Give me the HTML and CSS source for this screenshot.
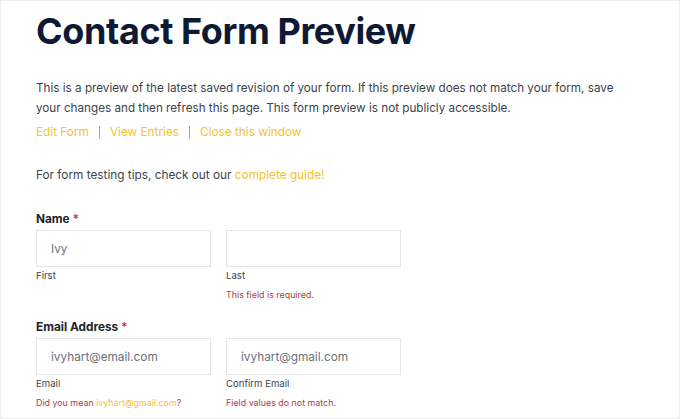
FILE: index.html
```html
<!DOCTYPE html>
<html>
<head>
<meta charset="utf-8">
<link rel="stylesheet" href="styles.css">
</head>
<body>
<div class="page">
  <h1 class="title">Contact Form Preview</h1>
  <p class="intro">This is a preview of the latest saved revision of your form. If this preview does not match your form, save your changes and then refresh this page. This form preview is not publicly accessible.</p>
  <nav class="links">
    <a class="link">Edit Form</a><span class="sep"></span><a class="link">View Entries</a><span class="sep"></span><a class="link">Close this window</a>
  </nav>
  <p class="tips">For form testing tips, check out our <a class="link">complete guide!</a></p>

  <div class="field">
    <div class="label">Name <span class="req">*</span></div>
    <div class="row">
      <div class="col">
        <div class="input">Ivy</div>
        <div class="sub">First</div>
      </div>
      <div class="col">
        <div class="input"></div>
        <div class="sub">Last</div>
        <div class="error">This field is required.</div>
      </div>
    </div>
  </div>

  <div class="field">
    <div class="label">Email Address <span class="req">*</span></div>
    <div class="row">
      <div class="col">
        <div class="input">ivyhart@email.com</div>
        <div class="sub">Email</div>
        <div class="error">Did you mean <a class="link">ivyhart@gmail.com</a>?</div>
      </div>
      <div class="col">
        <div class="input">ivyhart@gmail.com</div>
        <div class="sub">Confirm Email</div>
        <div class="error">Field values do not match.</div>
      </div>
    </div>
  </div>
</div>
</body>
</html>
```

FILE: styles.css
```css
html, body {
  margin: 0;
  padding: 0;
  background: #ffffff;
}
.page {
  box-sizing: border-box;
  width: 680px;
  height: 419px;
  overflow: hidden;
  border: 1px solid #ededed;
  padding: 8px 0 0 35px;
  font-family: Inter, "Noto Sans", sans-serif;
  color: #3c434a;
}
.title {
  margin: 0;
  font-family: Inter, sans-serif;
  font-weight: 700;
  font-size: 36px;
  line-height: 44px;
  color: #0e1a33;
  letter-spacing: -0.4px;
}
.intro {
  margin: 26px 0 0;
  font-size: 11.7px;
  line-height: 19.5px;
  width: 600px;
}
.links {
  display: flex;
  align-items: center;
  margin-top: 5px;
  font-size: 11.8px;
  line-height: 19px;
}
.link {
  color: #f6c22e;
  text-decoration: none;
}
.sep {
  width: 1px;
  height: 13px;
  background: #a0a5aa;
  margin: 0 10px;
}
.tips {
  margin: 24px 0 0;
  font-size: 11.8px;
  line-height: 19px;
}
.field {
  margin-top: 26px;
}
.field + .field {
  margin-top: 18px;
}
.label {
  font-weight: 700;
  font-size: 11.8px;
  line-height: 16px;
  color: #1d2327;
}
.req {
  color: #d63638;
}
.row {
  display: flex;
  gap: 15px;
  margin-top: 3px;
}
.col {
  width: 175px;
}
.input {
  box-sizing: border-box;
  height: 37px;
  border: 1px solid #e6e6e6;
  padding: 0 14px;
  display: flex;
  align-items: center;
  font-size: 11.8px;
  color: #6b7079;
}
.sub {
  margin-top: 2px;
  font-size: 9.6px;
  line-height: 14px;
  color: #3c434a;
}
.error {
  margin-top: 5px;
  font-size: 8.9px;
  line-height: 13px;
  color: #b13c3e;
}
```
